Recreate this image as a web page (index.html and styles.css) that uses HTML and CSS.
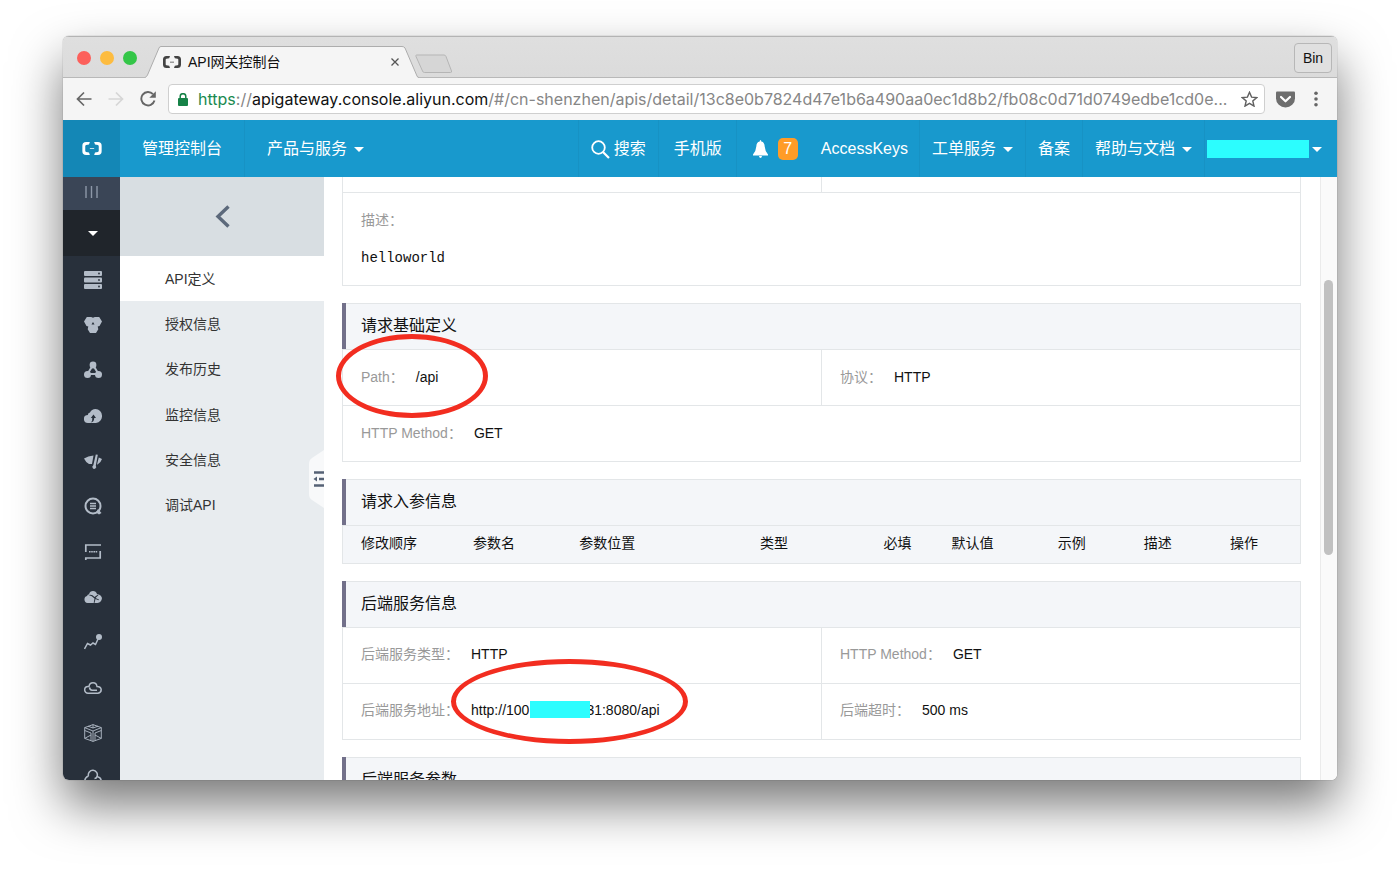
FILE: index.html
```html
<!DOCTYPE html>
<html lang="zh-CN">
<head>
<meta charset="utf-8">
<title>API网关控制台</title>
<link rel="stylesheet" href="styles.css">
</head>
<body>
<svg class="defs" aria-hidden="true">
  <symbol id="brand" viewBox="0 0 20 14"><path d="M8 1H4.500Q1 1 1 4.500v5Q1 13 4.500 13H8l-.8-2.200-2.700-.6Q3.700 10 3.700 9.200V4.800q0-.8.8-1l2.700-.6zM12 1h3.500Q19 1 19 4.500v5q0 3.500-3.500 3.500H12l.8-2.200 2.700-.6q.8-.2.8-1V4.800q0-.8-.8-1l-2.700-.6zM8 6.700h4v.8h-4z" fill="currentColor"/></symbol>
</svg>
<div class="window">
  <div class="tabbar">
    <div class="lights">
      <button class="light red" aria-label="关闭"></button>
      <button class="light yellow" aria-label="最小化"></button>
      <button class="light green" aria-label="缩放"></button>
    </div>
    <div class="tab">
      <svg class="tab-shape" viewBox="0 0 274 32" aria-hidden="true"><path d="M0 31.500Q1.500 31 2.500 29L14 2Q14.500.5 16 .5H257Q259 .5 260 2L272 30q.5 1.500 2 1.500V32H0z" fill="#f5f5f5"/><path d="M0 31.500Q1.500 31 2.500 29L14 2Q14.500.5 16 .5H257Q259 .5 260 2L272 30q.5 1.500 2 1.500" fill="none" stroke="#adadad"/></svg>
      <svg class="tab-logo" aria-hidden="true"><use href="#brand"/></svg>
      <span class="tab-title">API网关控制台</span>
      <button class="tab-close" aria-label="关闭标签页"><svg width="8" height="8" viewBox="0 0 8 8"><path d="M.5.5l7 7M7.500.5l-7 7" stroke="#555" stroke-width="1.300"/></svg></button>
    </div>
    <button class="newtab" aria-label="新标签页"><svg width="38" height="20" viewBox="0 0 38 20"><path d="M1.500 1H29q1.500 0 2 1.500l5.500 14.500q.5 1.500-1 1.500H9.500q-1.500 0-2-1.500L1 2.500Q.5 1 1.500 1z" fill="#d6d6d6" stroke="#b5b5b5"/></svg></button>
    <button class="profile">Bin</button>
  </div>
  <div class="toolbar">
    <button class="tool" aria-label="后退"><svg width="16" height="16" viewBox="0 0 16 16"><path d="M15.500 8H1.500M8 1.500L1.500 8 8 14.500" fill="none" stroke="#666" stroke-width="1.700"/></svg></button>
    <button class="tool" aria-label="前进"><svg width="16" height="16" viewBox="0 0 16 16"><path d="M.5 8h14M8 1.500L14.500 8 8 14.500" fill="none" stroke="#d6d6d6" stroke-width="1.700"/></svg></button>
    <button class="tool" aria-label="刷新"><svg width="16" height="16" viewBox="0 0 16 16"><path d="M13 3.200A6.700 6.700 0 1 0 14.500 9.500" fill="none" stroke="#666" stroke-width="1.900"/><path d="M15.800.3v6.500H9.300z" fill="#666"/></svg></button>
    <div class="omnibox">
      <svg class="lock" width="10" height="13" viewBox="0 0 10 13" aria-hidden="true"><path d="M2.200 6V3.500a2.800 2.800 0 0 1 5.600 0V6" fill="none" stroke="#168247" stroke-width="1.500"/><rect y="5" width="10" height="8" rx="1" fill="#168247"/></svg>
      <div class="url" role="textbox" aria-label="地址" contenteditable="true" spellcheck="false"><span class="secure">https</span>://<span class="host">apigateway.console.aliyun.com</span>/#/cn-shenzhen/apis/detail/13c8e0b7824d47e1b6a490aa0ec1d8b2/fb08c0d71d0749edbe1cd0e...</div>
      <button class="star" aria-label="收藏"><svg width="17" height="16" viewBox="0 0 17 16"><path d="M8.500 1.300l2.100 4.800 5.100.5-3.900 3.400 1.200 5.100-4.500-2.700L4 15.100 5.200 10 1.300 6.600l5.100-.5z" fill="none" stroke="#606060" stroke-width="1.400"/></svg></button>
    </div>
    <button class="tool pocket" aria-label="Pocket"><svg width="19" height="17" viewBox="0 0 19 17"><path d="M1 .5h17q1 0 1 1V7.500a9.500 9 0 0 1-19 0V1.500q0-1 1-1z" fill="#6e6e6e"/><path d="M5 6l4.500 4.300L14 6" fill="none" stroke="#fff" stroke-width="2.200" stroke-linecap="round" stroke-linejoin="round"/></svg></button>
    <button class="tool more" aria-label="菜单"><svg width="4" height="16" viewBox="0 0 4 16"><g fill="#666"><circle cx="2" cy="2.200" r="1.800"/><circle cx="2" cy="8" r="1.800"/><circle cx="2" cy="13.800" r="1.800"/></g></svg></button>
  </div>

  <header class="topnav">
    <a class="home" href="#" aria-label="首页"><svg width="22" height="15"><use href="#brand"/></svg></a>
    <a class="nav wide" href="#">管理控制台</a>
    <a class="nav wide last" href="#">产品与服务<i class="caret"></i></a>
    <nav class="right">
      <a class="nav edge" href="#"><svg class="search" width="19" height="19" viewBox="0 0 19 19"><circle cx="7.500" cy="7.500" r="6.300" fill="none" stroke="#fff" stroke-width="1.800"/><path d="M12 12l6 6" stroke="#fff" stroke-width="2.200"/></svg>搜索</a>
      <a class="nav roomy" href="#">手机版</a>
      <a class="nav notice" href="#" aria-label="消息 7"><svg width="15" height="18" viewBox="0 0 15 18"><path d="M7.500 0q.8 0 .8 1.500Q11.500 2 11.700 6.500 12 11 15 14.500v1H0v-1Q3 11 3.300 6.500 3.500 2 6.700 1.500 6.700 0 7.500 0zM6 16h3q-.3 2-1.500 2T6 16z" fill="#fff"/></svg><span class="badge">7</span></a>
      <a class="nav plain" href="#">AccessKeys</a>
      <a class="nav" href="#">工单服务<i class="caret"></i></a>
      <a class="nav" href="#">备案</a>
      <a class="nav" href="#">帮助与文档<i class="caret"></i></a>
      <a class="nav user" href="#" aria-label="账号"><span class="mask"></span><i class="caret"></i></a>
    </nav>
  </header>

  <div class="body">
    <aside class="rail">
      <button class="rail-toggle" aria-label="展开"><svg width="13" height="12" viewBox="0 0 13 12"><path d="M1 0v12M6.500 0v12M12 0v12" stroke="#8d98a8" stroke-width="1.400"/></svg></button>
      <button class="rail-group" aria-label="产品"><i class="caret"></i></button>
      <ul class="rail-list">
        <li><a href="#" aria-label="云服务器"><svg viewBox="0 0 18 18"><rect y="0" width="18" height="5" rx="1"/><rect y="6.500" width="18" height="5" rx="1"/><rect y="13" width="18" height="5" rx="1"/><g class="cut"><circle cx="15" cy="2.500" r=".9"/><circle cx="15" cy="9" r=".9"/><circle cx="15" cy="15.500" r=".9"/></g></svg></a></li>
        <li><a href="#" aria-label="数据库"><svg viewBox="0 0 18 18"><path d="M2.800 1h4.400L9 1.800 10.800 1h4.400L18 5.500 15.500 10l-1.800.6.600 2.700L12 17H6L3.700 13.300l.6-2.700L2.500 10 0 5.500z"/><path class="cut" d="M9 6l1.500 2.600H7.500z"/></svg></a></li>
        <li><a href="#" aria-label="负载均衡"><svg viewBox="0 0 18 18"><path class="line" d="M9 4L3.500 13h11z" stroke-width="2"/><circle cx="9" cy="4" r="3.400"/><circle cx="3.500" cy="13.500" r="3.500"/><circle cx="14.500" cy="13.500" r="3.500"/></svg></a></li>
        <li><a href="#" aria-label="对象存储"><svg viewBox="0 0 18 18"><path d="M4 16a4 4 0 0 1-.2-8Q4 5.500 6 5.500 7.500 2 11.500 2A6.500 6.500 0 0 1 18 8.500 7 7 0 0 1 12 16z"/><path class="cut" d="M9.500 7.500l2.500 3.500h-1.800q0 4-3.500 4.500 2-1.500 1.600-4.500H6.800z"/></svg></a></li>
        <li><a href="#" aria-label="弹性伸缩"><svg viewBox="0 0 18 18"><path d="M0 6.500Q4 4 9.500 3.500L8 12H5Q1.500 10 0 6.500zM14.800 5.500Q16.500 6 18 7q-1 3.500-4.500 5.500H13zM11.800 2.500l2 .3-2 11a1.900 1.900 0 1 1-2.500-.5z"/></svg></a></li>
        <li><a href="#" aria-label="日志服务"><svg viewBox="0 0 18 18"><circle class="line" cx="9" cy="9" r="7.500" stroke-width="2"/><path d="M14 12l3.500 4-2.500 1.500-3-2z"/><path class="line" d="M6 6.500h6M6 9h6M6 11.500h6" stroke-width="1.300"/></svg></a></li>
        <li><a href="#" aria-label="消息服务"><svg viewBox="0 0 18 18"><path class="line" d="M1.800 9V2H17M16.200 8v7H1.800V17" stroke-width="1.700"/><path class="line" d="M5 8.700h8.400" stroke-width="1.600" stroke-dasharray="1.600 .6"/></svg></a></li>
        <li><a href="#" aria-label="云引擎"><svg viewBox="0 0 18 18"><path d="M3.500 15A3.600 3.600 0 0 1 3 8q.5-1.500 2-1.700Q6 3 9 3t4 3q4 .5 5 4-.5 4.500-4.500 5z"/><path class="cut" d="M4.500 7Q8 6 10.500 9l3.500-2.500.5.6L11.500 10l3.500 1.500-.4.700L11.500 11l-1 4-.8-.3.8-4.200Q8 7.500 4.500 7z"/></svg></a></li>
        <li><a href="#" aria-label="监控"><svg viewBox="0 0 18 18"><path class="line" d="M.5 16l3-5.500 3 1.500 2.500-2 2.500 1.500L14.500 5" stroke-width="1.500"/><circle cx="15" cy="4" r="3"/></svg></a></li>
        <li><a href="#" aria-label="云盾"><svg viewBox="0 0 18 18"><path class="line" d="M4 14.200A3.300 3.300 0 0 1 4 7.500h1Q5.500 3.800 9 3.800t4 3.700q4 0 4.200 3.300 0 3-3.200 3.400zM5.500 8.500q.5 2.700 2.500 2.700h5" stroke-width="1.500"/></svg></a></li>
        <li><a href="#" aria-label="容器服务"><svg viewBox="0 0 18 18"><path class="line" d="M9 .6l8.300 3v10.800L9 17.400.7 14.400V3.600zM.7 3.600L9 7l8.300-3.400M9 .6V4M9 7v10.400M.7 14.400L7 11M17.300 14.400L11 11M4 2.200L9 4l5-1.800M.7 6.500L7 9v7.500M17.300 6.500L11 9v7.500" stroke-width=".9"/></svg></a></li>
        <li><a href="#" aria-label="其他服务"><svg viewBox="0 0 18 18"><path class="line" d="M4.500 7A4.500 4.500 0 1 1 13 7.500Q12.500 9.500 10.500 9.500M4.500 7Q.8 8.500.8 12t4 4.500Q9 16.500 9 12.500M13 7.500q4.200 1 4.200 4.500t-4 4.500q-3.700 0-4.200-4" stroke-width="1.500"/></svg></a></li>
      </ul>
    </aside>
    <aside class="panel">
      <button class="back" aria-label="返回"><svg width="15" height="23" viewBox="0 0 15 23"><path d="M13.500 1.500L3 11.500l10.500 10" fill="none" stroke="#5c697b" stroke-width="3.400"/></svg></button>
      <ul class="menu">
        <li><a class="current" href="#">API定义</a></li>
        <li><a href="#">授权信息</a></li>
        <li><a href="#">发布历史</a></li>
        <li><a href="#">监控信息</a></li>
        <li><a href="#">安全信息</a></li>
        <li><a href="#">调试API</a></li>
      </ul>
      <button class="collapse" aria-label="收起"><svg width="15" height="58" viewBox="0 0 15 58"><path d="M15 0L3 8Q0 10 0 14v30q0 4 3 6l12 8z" fill="#f8f9fa"/><path d="M5 22.500h10M10 29h5M5 35.500h10" stroke="#556275" stroke-width="2.600"/><path d="M4.500 29l3.500-2.500v5z" fill="#556275"/></svg></button>
    </aside>
    <main class="content">
      <section class="card">
        <div class="row stub"><div class="cell"></div><div class="cell"></div></div>
        <div class="desc"><span class="label">描述：</span><pre class="code">helloworld</pre></div>
      </section>
      <section class="card">
        <h2 class="title">请求基础定义</h2>
        <div class="row">
          <div class="cell"><span class="label">Path：</span><span>/api</span><i class="ring ring-path"></i></div>
          <div class="cell"><span class="label">协议：</span><span>HTTP</span></div>
        </div>
        <div class="row"><div class="cell"><span class="label">HTTP Method：</span><span>GET</span></div></div>
      </section>
      <section class="card">
        <h2 class="title">请求入参信息</h2>
        <table class="params">
          <colgroup><col class="c-order"><col class="c-name"><col class="c-place"><col class="c-type"><col class="c-need"><col class="c-name"><col class="c-small"><col class="c-small"><col></colgroup>
          <thead><tr><th>修改顺序</th><th>参数名</th><th>参数位置</th><th>类型</th><th>必填</th><th>默认值</th><th>示例</th><th>描述</th><th>操作</th></tr></thead>
        </table>
      </section>
      <section class="card">
        <h2 class="title">后端服务信息</h2>
        <div class="row">
          <div class="cell"><span class="label">后端服务类型：</span><span>HTTP</span></div>
          <div class="cell"><span class="label">HTTP Method：</span><span>GET</span></div>
        </div>
        <div class="row">
          <div class="cell"><span class="label">后端服务地址：</span><span class="address">http://100<i class="mask-ip"></i>31:8080/api</span><i class="ring ring-address"></i></div>
          <div class="cell"><span class="label">后端超时：</span><span>500 ms</span></div>
        </div>
      </section>
      <section class="card">
        <h2 class="title">后端服务参数</h2>
      </section>
    </main>
    <div class="scroll"><div class="thumb"></div></div>
  </div>
</div>
</body>
</html>
```
FILE: styles.css
```css
* { box-sizing: border-box; }

body {
  margin: 0;
  height: 100vh;
  padding: 36px 63px 91px;
  background: #fff;
  color: #111;
  font: 14px/20px "Liberation Sans", "Noto Sans CJK SC", sans-serif;
  overflow: hidden;
}

button { padding: 0; border: 0; background: none; font: inherit; color: inherit; }
a { color: inherit; text-decoration: none; }
ul { margin: 0; padding: 0; list-style: none; }
svg { display: block; flex: none; }
.defs { display: none; }

.window {
  display: flex;
  flex-direction: column;
  height: 100%;
  border-radius: 6px;
  overflow: hidden;
  box-shadow: 0 0 1px rgba(0, 0, 0, .6), 0 25px 50px rgba(0, 0, 0, .53);
}

/* Browser tabs */
.tabbar {
  display: flex;
  flex: none;
  align-items: flex-end;
  height: 42px;
  background: linear-gradient(#dfdfdf, #dbdbdb);
  border-top: 1px solid #b4b4b4;
  box-shadow: inset 0 -1px #b8b8b8;
}
.lights { display: flex; align-self: center; gap: 9px; padding-left: 14px; }
.light { width: 14px; height: 14px; border-radius: 50%; }
.red { background: #fc605b; }
.yellow { background: #fdbc40; }
.green { background: #34c648; }
.tab {
  position: relative;
  display: flex;
  align-items: center;
  width: 274px;
  height: 32px;
  margin-left: 8px;
  padding: 0 20px 0 17px;
}
.tab-shape { position: absolute; left: 0; top: 0; width: 100%; height: 32px; }
.tab-logo { position: relative; width: 20px; height: 14px; color: #444; }
.tab-title { position: relative; flex: 1; margin-left: 6px; }
.tab-close { position: relative; }
.newtab { padding-bottom: 4px; margin-left: -4px; }
.profile {
  align-self: center;
  width: 38px;
  height: 30px;
  margin: 0 5px 0 auto;
  border: 1px solid #b7b7b7;
  border-radius: 4px;
  background: #e0e0e0;
}

/* Address bar */
.toolbar {
  display: flex;
  flex: none;
  align-items: center;
  height: 42px;
  padding-left: 13px;
  gap: 16px;
  background: #f5f5f5;
}
.omnibox {
  display: flex;
  flex: 1;
  align-items: center;
  min-width: 0;
  height: 30px;
  margin-left: -4px;
  padding: 0 6px 0 9px;
  border: 1px solid #cfcfcf;
  border-radius: 4px;
  background: #fff;
}
.url {
  flex: 1;
  min-width: 0;
  margin-left: 10px;
  overflow: hidden;
  white-space: nowrap;
  color: #868686;
  font: 16px/20px Inter, sans-serif;
}
.secure { color: #1a8a50; }
.host { color: #111; }
.pocket { margin-left: -5px; }
.more { margin: 0 19px 0 3px; }

/* Console header */
.topnav {
  display: flex;
  flex: none;
  height: 57px;
  background: #1899cd;
  color: #fff;
  font-size: 16px;
}
.home { display: grid; place-items: center; width: 57px; background: #1487b6; }
.nav {
  display: flex;
  align-items: center;
  padding: 1px 12px 0;
  border-left: 1px solid #1792c4;
  white-space: nowrap;
}
.nav.wide { padding: 0 22px; border-left: 0; border-right: 1px solid #1792c4; }
.nav.last { padding-top: 1px; border-right: 0; }
.nav.roomy { padding-left: 15px; padding-right: 14px; }
.nav.plain { padding-right: 11px; border-left: 0; }
.right { display: flex; margin-left: auto; }
.search { margin-right: 4px; }
.nav.notice { padding-left: 16px; padding-right: 11px; gap: 10px; }
.badge {
  width: 20px;
  border-radius: 5px;
  background: #ff9c27;
  line-height: 22px;
  text-align: center;
}
.caret {
  width: 0;
  border: 5px solid transparent;
  border-top-color: #fff;
  border-bottom: 0;
  margin-left: 7px;
}
.nav.user { padding-left: 2px; padding-right: 15px; }
.mask { width: 102px; height: 18px; background: #2cfdfe; }
.user .caret { margin-left: 3px; }

/* Page body */
.body { display: flex; flex: 1; min-height: 0; background: #fff; }
.rail { flex: none; width: 57px; background: #28303b; overflow: hidden; }
.rail-toggle { display: grid; place-items: center; width: 100%; height: 33px; padding-bottom: 3px; background: #3a4556; }
.rail-group { display: grid; place-items: center; width: 100%; height: 46px; padding-left: 2px; background: #20252b; }
.rail-group .caret { margin: 0; }
.rail-list { padding-top: 1px; }
.rail-list a { display: grid; place-items: center; height: 100%; padding-left: 2px; }
.rail-list svg { width: 18px; height: 18px; fill: #b3bcc8; }
.rail-list .cut { fill: #28303b; }
.rail-list .line { fill: none; stroke: #b3bcc8; }
.rail-list li, .menu li { height: 45px; }
.rail-list li:nth-child(3n), .menu li:nth-child(3n) { height: 46px; }

.panel { position: relative; flex: none; width: 204px; background: #e8ecef; }
.back { display: grid; place-items: center; width: 100%; height: 79px; background: #d8dee2; }
.menu a { display: flex; align-items: center; height: 100%; padding-left: 45px; color: #333; }
.menu .current { background: #fff; }
.collapse { position: absolute; right: 0; top: 273px; }

.content {
  display: flex;
  flex: 1;
  flex-direction: column;
  gap: 17px;
  min-width: 0;
  padding: 0 19px 0 18px;
  overflow: hidden;
}
.card { flex: none; border: 1px solid #e3e6e8; }
.card:first-child { border-top: 0; }
.title {
  margin: -1px 0 0 -1px;
  padding: 0 0 1px 15px;
  border-left: 4px solid #72708a;
  background: #f4f6f9;
  box-shadow: inset 0 1px #e3e6e8;
  font-size: 16px;
  font-weight: 400;
  line-height: 45px;
}
.row { display: flex; border-top: 1px solid #e3e6e8; }
.cell { position: relative; display: flex; flex: 1; align-items: center; height: 55px; padding: 0 0 2px 18px; }
.cell + .cell { border-left: 1px solid #e3e6e8; }
.stub { border-top: 0; }
.stub .cell { height: 15px; }
.label { margin-right: 12px; color: #999; }
.desc { padding: 17px 18px; border-top: 1px solid #e3e6e8; }
.code { margin: 18px 0 0; font: 14px/20px "Liberation Mono", monospace; }
.mask-ip {
  position: relative;
  display: inline-block;
  width: 60px;
  height: 17px;
  margin: 0 -4px 0 1px;
  background: #2cfdfe;
  vertical-align: -3px;
}
.ring { position: absolute; z-index: 1; border: 5px solid #f22d20; border-radius: 50%; }
.ring-path { left: -7px; top: -16px; width: 152px; height: 84px; }
.ring-address { left: 108px; top: -25px; width: 237px; height: 85px; }

.params { width: 100%; border-collapse: collapse; table-layout: fixed; background: #f4f6f9; }
.params th { height: 37px; padding: 0 0 2px 18px; border-top: 1px solid #e3e6e8; font-weight: 400; text-align: left; }
.c-order { width: 11.7%; }
.c-name { width: 11.1%; }
.c-place { width: 18.9%; }
.c-type { width: 12.9%; }
.c-need { width: 7.1%; }
.c-small { width: 9%; }

.scroll { flex: none; width: 17px; padding: 103px 4px 0 3px; border-left: 1px solid #ebebeb; background: #fafafa; }
.thumb { height: 275px; border-radius: 5px; background: #c1c1c1; }
```
